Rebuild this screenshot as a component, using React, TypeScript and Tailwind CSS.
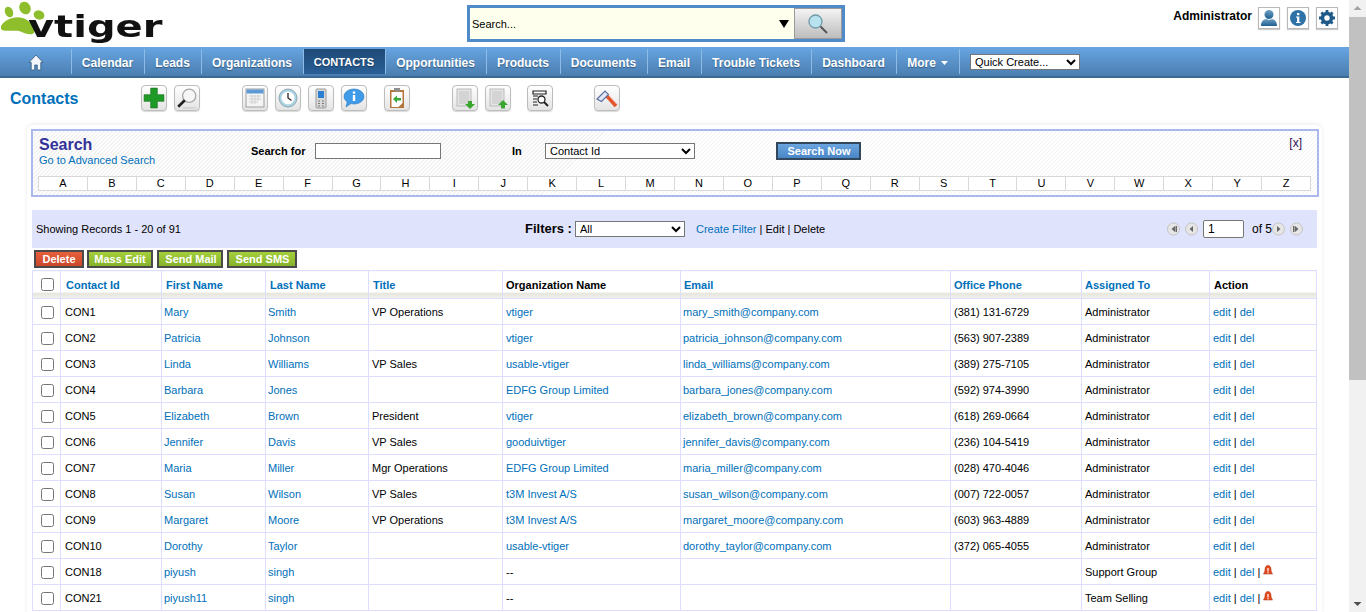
import type { ReactNode } from "react"

const navItems = [
  { label: "Calendar", w: "w-[73px]" },
  { label: "Leads", w: "w-[57px]" },
  { label: "Organizations", w: "w-[102px]" },
  { label: "CONTACTS", w: "w-[82px] text-[11px]", active: true },
  { label: "Opportunities", w: "w-[101px]" },
  { label: "Products", w: "w-[74px]" },
  { label: "Documents", w: "w-[87px]" },
  { label: "Email", w: "w-[54px]" },
  { label: "Trouble Tickets", w: "w-[110px]" },
  { label: "Dashboard", w: "w-[85px]" },
]

const rows = [
  ["CON1", "Mary", "Smith", "VP Operations", "vtiger", "mary_smith@company.com", "(381) 131-6729", "Administrator"],
  ["CON2", "Patricia", "Johnson", "", "vtiger", "patricia_johnson@company.com", "(563) 907-2389", "Administrator"],
  ["CON3", "Linda", "Williams", "VP Sales", "usable-vtiger", "linda_williams@company.com", "(389) 275-7105", "Administrator"],
  ["CON4", "Barbara", "Jones", "", "EDFG Group Limited", "barbara_jones@company.com", "(592) 974-3990", "Administrator"],
  ["CON5", "Elizabeth", "Brown", "President", "vtiger", "elizabeth_brown@company.com", "(618) 269-0664", "Administrator"],
  ["CON6", "Jennifer", "Davis", "VP Sales", "gooduivtiger", "jennifer_davis@company.com", "(236) 104-5419", "Administrator"],
  ["CON7", "Maria", "Miller", "Mgr Operations", "EDFG Group Limited", "maria_miller@company.com", "(028) 470-4046", "Administrator"],
  ["CON8", "Susan", "Wilson", "VP Sales", "t3M Invest A/S", "susan_wilson@company.com", "(007) 722-0057", "Administrator"],
  ["CON9", "Margaret", "Moore", "VP Operations", "t3M Invest A/S", "margaret_moore@company.com", "(603) 963-4889", "Administrator"],
  ["CON10", "Dorothy", "Taylor", "", "usable-vtiger", "dorothy_taylor@company.com", "(372) 065-4055", "Administrator"],
  ["CON18", "piyush", "singh", "", "--", "", "", "Support Group"],
  ["CON21", "piyush11", "singh", "", "--", "", "", "Team Selling"],
]

const headers = [
  { label: "Contact Id", link: true, pl: "pl-[5px]" },
  { label: "First Name", link: true, pl: "pl-[4px]" },
  { label: "Last Name", link: true, pl: "pl-[4px]" },
  { label: "Title", link: true, pl: "pl-[4px]" },
  { label: "Organization Name", link: false, pl: "pl-[3px]" },
  { label: "Email", link: true, pl: "pl-[3px]" },
  { label: "Office Phone", link: true, pl: "pl-[3px]" },
  { label: "Assigned To", link: true, pl: "pl-[3px]" },
  { label: "Action", link: false, pl: "pl-[4px]" },
]

function ToolButton({ children, className = "" }: { children: ReactNode; className?: string }) {
  return (
    <div className={`flex h-[26px] w-[26px] shrink-0 items-center justify-center rounded-[4px] border border-[#bdbdbd] bg-gradient-to-b from-[#ffffff] to-[#e4e4e4] shadow-[0_1px_1px_rgba(0,0,0,0.15)] ${className}`}>
      {children}
    </div>
  )
}

function Logo() {
  return (
    <div className="flex h-[47px] w-[467px] shrink-0 items-start">
      <svg width="50" height="36" viewBox="0 0 50 36" className="shrink-0 blur-[0.5px]">
        <ellipse cx="9" cy="12" rx="4" ry="5.500" fill="#8fbe2c" transform="rotate(-25 9 12)" />
        <ellipse cx="25" cy="8" rx="5.500" ry="6.500" fill="#8fbe2c" transform="rotate(-30 25 8)" />
        <ellipse cx="39" cy="15" rx="5.500" ry="4.500" fill="#8fbe2c" transform="rotate(20 39 15)" />
        <path d="M1 26 C5 19 18 14 27 20 C33 24 36 29 34 33 C31 36 24 33 19 31 C13 30 3 32 1 29 Z" fill="#8fbe2c" />
      </svg>
      <span className="-ml-[22px] mt-[7px] inline-block origin-left scale-x-[1.29] font-['DejaVu_Sans',sans-serif] text-[31px] leading-[38px] font-bold text-[#111111] blur-[0.5px]">
        vtiger
      </span>
    </div>
  )
}

function HeaderIcon({ children }: { children: ReactNode }) {
  return (
    <div className="flex h-[22px] w-[22px] items-center justify-center border border-[#b8b8b8] bg-white shadow-[0_1px_1px_rgba(0,0,0,0.2)]">
      {children}
    </div>
  )
}

function TopBar() {
  return (
    <div className="flex h-[47px] items-start">
      <Logo />
      <div className="mt-[5px] flex h-[37px] w-[378px] border-[3px] border-[#4f8bc9] bg-[#ffffee]">
        <div className="flex flex-1 items-center pt-[1px] pl-[2px] text-[11px] text-black">Search...</div>
        <div className="mr-[4px] flex items-center">
          <svg width="12" height="8" viewBox="0 0 12 8"><path d="M1 0h10L6 8z" fill="#000" /></svg>
        </div>
        <div className="flex w-[48px] items-center justify-center border border-[#9a9a9a] bg-gradient-to-b from-[#f4f4f4] to-[#bdbdbd]">
          <svg width="22" height="22" viewBox="0 0 22 22">
            <circle cx="8.500" cy="8.500" r="6.500" fill="#b8e3ee" stroke="#6f9aa8" strokeWidth="1.300" />
            <path d="M13.500 13.500L20 20" stroke="#555" strokeWidth="2" />
          </svg>
        </div>
      </div>
      <div className="mr-[11px] ml-auto mt-[7px] flex items-start">
        <span className="mt-[2px] mr-[6px] text-[12px] leading-[14px] font-bold text-black">Administrator</span>
        <HeaderIcon>
          <svg width="18" height="18" viewBox="0 0 18 18">
            <defs>
              <linearGradient id="userFill" x1="0" y1="0" x2="0" y2="1">
                <stop offset="0" stopColor="#6fa0c4" />
                <stop offset="1" stopColor="#1f5f90" />
              </linearGradient>
            </defs>
            <circle cx="9" cy="5.500" r="4.500" fill="url(#userFill)" />
            <path d="M1 17c0-5 3-6.500 5-7l3 1 3-1c2 .5 5 2 5 7z" fill="url(#userFill)" />
          </svg>
        </HeaderIcon>
        <div className="w-[7px]" />
        <HeaderIcon>
          <svg width="18" height="18" viewBox="0 0 18 18">
            <circle cx="9" cy="9" r="8" fill="#2f72a6" />
            <path d="M7 7.500h3.300V13h1.200v1h-4.500v-1h1.100V8.500H7z" fill="#fff" />
            <rect x="8" y="4" width="2.400" height="2.200" fill="#fff" />
          </svg>
        </HeaderIcon>
        <div className="w-[7px]" />
        <HeaderIcon>
          <svg width="18" height="18" viewBox="0 0 18 18">
            <circle cx="9" cy="9" r="4.500" fill="none" stroke="#1f5a88" strokeWidth="3.600" />
            <path d="M9 1v3M9 14v3M1 9h3M14 9h3M3.400 3.400l2.100 2.100M12.500 12.500l2.100 2.100M14.600 3.400l-2.100 2.100M5.500 12.500l-2.100 2.100" stroke="#1f5a88" strokeWidth="2.800" />
          </svg>
        </HeaderIcon>
      </div>
    </div>
  )
}

function NavBar() {
  return (
    <div className="flex h-[31px] items-stretch border-b-2 border-b-[#3d6a94] bg-gradient-to-b from-[#68a5e2] to-[#4a7eb0] text-[12px] font-bold text-white">
      <div className="my-[2px] flex w-[72px] items-center justify-center border-r border-[#8dbbe6] pt-[2px]">
        <svg width="16" height="17" viewBox="0 0 16 17">
          <path d="M8 1L1 8.500h2.200V16h3.500v-5h2.600v5h3.500V8.500H15z" fill="#f2f6fa" stroke="#33597d" strokeWidth="0.800" />
        </svg>
      </div>
      {navItems.map((item) => (
        <div
          key={item.label}
          className={`my-[2px] flex items-center justify-center border-r border-[#8dbbe6] pt-[2px] pr-[1px] [text-shadow:0_1px_1px_rgba(0,0,0,0.35)] ${item.w} ${item.active ? "bg-gradient-to-b from-[#1f4a78] to-[#2a5f96]" : ""}`}
        >
          {item.label}
        </div>
      ))}
      <div className="my-[2px] flex w-[63px] items-center justify-center gap-[5px] border-r border-[#8dbbe6] pt-[2px] pr-[1px] [text-shadow:0_1px_1px_rgba(0,0,0,0.35)]">
        More
        <svg width="7" height="4" viewBox="0 0 7 4"><path d="M0 0h7L3.500 4z" fill="#fff" /></svg>
      </div>
      <div className="ml-[10px] flex items-center pt-[1px]">
        <select className="h-[16px] w-[110px] border border-[#767676] bg-white text-[11px] leading-[14px] font-normal text-black">
          <option>Quick Create...</option>
        </select>
      </div>
    </div>
  )
}

function Toolbar() {
  return (
    <div className="flex h-[47px] items-start pt-[7px]">
      <div className="w-[141px] shrink-0 pl-[10px] text-[16px] leading-[28px] font-bold text-[#0070ba]">Contacts</div>
      <ToolButton>
        <svg width="22" height="22" viewBox="0 0 20 20">
          <path d="M7 1h6v6h6v6h-6v6H7v-6H1V7h6z" fill="#1f9a26" stroke="#16721c" strokeWidth="0.600" />
        </svg>
      </ToolButton>
      <ToolButton className="ml-[7px]">
        <svg width="22" height="22" viewBox="0 0 20 20">
          <circle cx="12" cy="8" r="6" fill="#f6f6f6" stroke="#a8a8a8" strokeWidth="1.200" />
          <path d="M8 12L2 18" stroke="#222" strokeWidth="2.400" />
          <path d="M6 19h12" stroke="#c8c8c8" strokeWidth="1" />
        </svg>
      </ToolButton>
      <ToolButton className="ml-[42px]">
        <svg width="20" height="20" viewBox="0 0 20 20">
          <rect x="1" y="1" width="18" height="18" fill="#f4f4f4" stroke="#a0a0a0" />
          <rect x="1.500" y="1.500" width="17" height="4" fill="#5d9ad6" />
          <path d="M4 8h12M4 11h12M4 14h9M7 7v9M10 7v9M13 7v6" stroke="#d0d0d0" strokeWidth="1" />
        </svg>
      </ToolButton>
      <ToolButton className="ml-[7px]">
        <svg width="20" height="20" viewBox="0 0 20 20">
          <circle cx="10" cy="10" r="9" fill="#a9d2e2" stroke="#8fa8b4" />
          <circle cx="10" cy="10" r="6.500" fill="#ffffff" />
          <path d="M10 5v5l3.500 2.500" fill="none" stroke="#222" strokeWidth="1.300" />
        </svg>
      </ToolButton>
      <ToolButton className="ml-[7px]">
        <svg width="14" height="21" viewBox="0 0 14 21">
          <rect x="2" y="1" width="10" height="19" rx="1" fill="#d8d8d8" stroke="#9a9a9a" />
          <rect x="4" y="3" width="6" height="7" fill="#2a7fd0" />
          <path d="M4 13h2M8 13h2M4 15.500h2M8 15.500h2M4 18h2M8 18h2" stroke="#777" strokeWidth="1.200" />
        </svg>
      </ToolButton>
      <ToolButton className="ml-[7px]">
        <svg width="22" height="20" viewBox="0 0 22 20">
          <path d="M11 1c5.500 0 10 3.300 10 7.500S16.500 16 11 16c-1 0-2-.1-3-.4L3 19l1.200-5C2.300 12.600 1 10.700 1 8.500 1 4.300 5.500 1 11 1z" fill="#3f9be8" stroke="#2c79be" strokeWidth="0.600" />
          <rect x="9.800" y="7" width="2.400" height="6" fill="#fff" />
          <rect x="9.800" y="3.500" width="2.400" height="2.200" fill="#fff" />
        </svg>
      </ToolButton>
      <ToolButton className="ml-[17px]">
        <svg width="18" height="22" viewBox="0 0 18 22">
          <path d="M2 3h14v18H2z" fill="#b5763c" />
          <path d="M3.500 5h11v11l-4 4h-7z" fill="#fff" />
          <rect x="6" y="1" width="6" height="3.500" fill="#8f8f8f" />
          <path d="M5 12l4-3.500V11h4v2.500H9V16z" fill="#39a83a" />
        </svg>
      </ToolButton>
      <ToolButton className="ml-[42px]">
        <svg width="24" height="24" viewBox="0 0 24 24">
          <rect x="4" y="3" width="14" height="17" fill="#e4e4e4" stroke="#bbbbbb" />
          <rect x="6" y="5" width="10" height="13" fill="#d4d4d4" />
          <path d="M15 15h4v3h3l-5 5-5-5h3z" fill="#3aa52f" />
        </svg>
      </ToolButton>
      <ToolButton className="ml-[7px]">
        <svg width="24" height="24" viewBox="0 0 24 24">
          <rect x="4" y="3" width="14" height="17" fill="#e4e4e4" stroke="#bbbbbb" />
          <rect x="6" y="5" width="10" height="13" fill="#d4d4d4" />
          <path d="M17 14l5 5h-3v3.500h-4V19h-3z" fill="#3aa52f" />
        </svg>
      </ToolButton>
      <ToolButton className="ml-[16px]">
        <svg width="18" height="18" viewBox="0 0 18 18">
          <path d="M2 2h13v3H2zM2 7h5M2 10h4M2 13h4M2 16h5" fill="none" stroke="#222" strokeWidth="1.200" />
          <circle cx="10.500" cy="10.500" r="3.500" fill="#fff" stroke="#222" strokeWidth="1.300" />
          <path d="M13 13l4 4" stroke="#222" strokeWidth="2" />
        </svg>
      </ToolButton>
      <ToolButton className="ml-[41px]">
        <svg width="24" height="24" viewBox="0 0 24 24">
          <path d="M11 9l10 11" stroke="#e2552a" strokeWidth="3.600" />
          <path d="M12.500 8l9 10" stroke="#f7b29a" strokeWidth="0.800" />
          <path d="M2 13l8-8 3.500 3.500-7 7z" fill="#dfe6f6" stroke="#5b6f9e" strokeWidth="1.100" />
        </svg>
      </ToolButton>
    </div>
  )
}

function SearchPanel() {
  const letters = "ABCDEFGHIJKLMNOPQRSTUVWXYZ".split("")
  return (
    <div className="h-[68px] border-2 border-[#aab8ee] bg-[repeating-linear-gradient(135deg,#ffffff_0,#ffffff_1.9px,#f2f2f2_1.9px,#f2f2f2_2.83px)]">
      <div className="flex h-[45px] items-start text-[11px]">
        <div className="w-[218px] shrink-0 pt-[5px] pl-[6px]">
          <div className="text-[16px] leading-[18px] font-bold text-[#333399]">Search</div>
          <div className="leading-[13px] text-[#0070ba]">Go to Advanced Search</div>
        </div>
        <div className="mt-[12px] w-[64px] shrink-0 leading-[16px] font-bold text-black">Search for</div>
        <input readOnly className="mt-[12px] h-[16px] w-[126px] shrink-0 border border-[#767676] bg-white" />
        <div className="mt-[12px] ml-[71px] w-[33px] shrink-0 leading-[16px] font-bold text-black">In</div>
        <select className="mt-[12px] h-[16px] w-[150px] shrink-0 border border-[#767676] bg-white text-[11px] leading-[14px] text-black">
          <option>Contact Id</option>
        </select>
        <div className="mt-[11px] ml-[81px] flex h-[18px] w-[85px] shrink-0 items-center justify-center border-2 border-[#33475c] bg-gradient-to-b from-[#6aa5e0] to-[#4a86c5] pl-[1px] font-bold text-white">
          Search Now
        </div>
        <div className="mt-[5px] mr-[15px] ml-auto text-[12px] leading-[14px] text-[#331155]">[x]</div>
      </div>
      <div className="ml-[5px] grid w-[1273px] grid-cols-[repeat(26,minmax(0,1fr))] border-t border-l border-[#d8d8d8] bg-white text-[11px] text-black">
        {letters.map((letter) => (
          <div key={letter} className="h-[14px] border-r border-b border-[#d8d8d8] text-center leading-[13px]">
            {letter}
          </div>
        ))}
      </div>
    </div>
  )
}

function PagerIcon({ dir, end }: { dir: "left" | "right"; end?: boolean }) {
  return (
    <svg width="13" height="14" viewBox="0 0 13 14" className="shrink-0">
      <circle cx="6.500" cy="7" r="6" fill="#e6e6e6" stroke="#c4c4c4" />
      {dir === "left" ? <path d="M8 4v6L4.500 7z" fill="#666" /> : <path d="M5 4v6L8.500 7z" fill="#666" />}
      {end && dir === "left" && <rect x="8.500" y="4" width="1.500" height="6" fill="#666" />}
      {end && dir === "right" && <rect x="3" y="4" width="1.500" height="6" fill="#666" />}
    </svg>
  )
}

function FilterBar() {
  return (
    <div className="mt-[13px] ml-[1px] flex h-[38px] w-[1285px] items-center bg-[#e0e3fc] text-[11px] text-black">
      <div className="w-[493px] shrink-0 pl-[4px]">Showing Records 1 - 20 of 91</div>
      <div className="w-[50px] shrink-0 text-[13px] font-bold">Filters :</div>
      <select className="h-[16px] w-[110px] shrink-0 border border-[#767676] bg-white text-[11px] leading-[14px]">
        <option>All</option>
      </select>
      <div className="ml-[11px]">
        <span className="text-[#0070ba]">Create Filter</span> | Edit | Delete
      </div>
      <div className="mr-[14px] ml-auto flex items-center">
        <PagerIcon dir="left" end />
        <div className="w-[5px]" />
        <PagerIcon dir="left" />
        <input readOnly value="1" className="ml-[5px] h-[18px] w-[41px] rounded-[2px] border border-[#767676] bg-white pl-[4px] text-[12px]" />
        <span className="ml-[8px] w-[20px] text-[12px] whitespace-nowrap">of 5</span>
        <PagerIcon dir="right" />
        <div className="w-[5px]" />
        <PagerIcon dir="right" end />
      </div>
    </div>
  )
}

function ActionButtons() {
  const green = "border-2 border-[#4a4a4a] bg-gradient-to-b from-[#a5cf3c] to-[#85b32a]"
  return (
    <div className="mt-[2px] ml-[3px] flex h-[20px] items-start text-[11px] font-bold text-white">
      <div className="flex h-[18px] w-[50px] items-center justify-center border-2 border-[#4a4a4a] bg-gradient-to-b from-[#e8603c] to-[#c9472a]">Delete</div>
      <div className={`ml-[3px] flex h-[18px] w-[66px] items-center justify-center ${green}`}>Mass Edit</div>
      <div className={`ml-[4px] flex h-[18px] w-[66px] items-center justify-center pl-[2px] ${green}`}>Send Mail</div>
      <div className={`ml-[4px] flex h-[18px] w-[70px] items-center justify-center pl-[1px] ${green}`}>Send SMS</div>
    </div>
  )
}

function AlertIcon() {
  return (
    <svg width="10" height="11" viewBox="0 0 10 11" className="-mt-[3px] ml-[3px] inline-block align-baseline">
      <path d="M5 0.500C7.200 0.500 8 2.500 8 4.500c0 2 .8 3 1.500 4.500h-9C1.200 7.500 2 6.500 2 4.500 2 2.500 2.800.5 5 .5z" fill="#e2481c" stroke="#a83010" strokeWidth="0.500" />
      <rect x="4.400" y="3" width="1.200" height="3.500" fill="#fff" />
      <rect x="4.400" y="7.200" width="1.200" height="1.200" fill="#fff" />
    </svg>
  )
}

function ContactsTable() {
  const cell = "border border-[#ddddff] pt-[2px] align-middle overflow-hidden whitespace-nowrap"
  const link = "text-[#0070ba]"
  return (
    <table className="ml-[1px] w-[1285px] table-fixed border-collapse text-[11px] leading-[13px] text-black">
      <colgroup>
        <col className="w-[28px]" />
        <col className="w-[101px]" />
        <col className="w-[104px]" />
        <col className="w-[103px]" />
        <col className="w-[134px]" />
        <col className="w-[178px]" />
        <col className="w-[270px]" />
        <col className="w-[131px]" />
        <col className="w-[128px]" />
        <col className="w-[107px]" />
      </colgroup>
      <thead>
        <tr className="h-[28px]">
          <th className="border border-[#ddddff] bg-[linear-gradient(to_bottom,#ffffff_78%,#e4e4dc_80%,#f4f4ee_100%)] pl-[1px] text-center align-middle">
            <input type="checkbox" className="align-middle" />
          </th>
          {headers.map((h) => (
            <th
              key={h.label}
              className={`border border-[#ddddff] bg-[linear-gradient(to_bottom,#ffffff_78%,#e4e4dc_80%,#f4f4ee_100%)] pt-[2px] text-left align-middle font-bold ${h.pl} ${h.link ? link : "text-black"}`}
            >
              {h.label}
            </th>
          ))}
        </tr>
      </thead>
      <tbody>
        {rows.map((r) => {
          const hasAlert = r[0] === "CON18" || r[0] === "CON21"
          return (
            <tr key={r[0]} className="h-[26px] bg-white">
              <td className="border border-[#ddddff] pt-[1px] pl-[1px] text-center align-middle">
                <input type="checkbox" className="align-middle" />
              </td>
              <td className={`${cell} pl-[4px]`}>{r[0]}</td>
              <td className={`${cell} pl-[2px] ${link}`}>{r[1]}</td>
              <td className={`${cell} pl-[2px] ${link}`}>{r[2]}</td>
              <td className={`${cell} pl-[3px]`}>{r[3]}</td>
              <td className={`${cell} pl-[3px] ${r[4] === "--" ? "text-black" : link}`}>{r[4]}</td>
              <td className={`${cell} pl-[2px] ${link}`}>{r[5]}</td>
              <td className={`${cell} pl-[3px]`}>{r[6]}</td>
              <td className={`${cell} pl-[3px]`}>{r[7]}</td>
              <td className={`${cell} pl-[3px]`}>
                <span className={link}>edit</span> | <span className={link}>del</span>
                {hasAlert && <> |<AlertIcon /></>}
              </td>
            </tr>
          )
        })}
      </tbody>
    </table>
  )
}

export default function App() {
  return (
    <div className="flex h-[612px] w-full overflow-hidden bg-white font-['Liberation_Sans',Arial,sans-serif]">
      <div className="w-[1349px] shrink-0 overflow-hidden">
        <TopBar />
        <NavBar />
        <Toolbar />
        <div className="mx-[27px] rounded-t-[6px] p-[4px] pr-[3px] shadow-[0_-1px_4px_rgba(0,0,0,0.08)]">
          <SearchPanel />
          <FilterBar />
          <ActionButtons />
          <ContactsTable />
        </div>
      </div>
      {/* page scrollbar */}
      <div className="flex w-[17px] shrink-0 flex-col items-center bg-[#f1f1f1]">
        <svg width="9" height="17" viewBox="0 0 9 17"><path d="M0.500 10L4.500 6l4 4z" fill="#a3a3a3" /></svg>
        <div className="h-[363px] w-full bg-[#c1c1c1]" />
        <div className="flex-1" />
        <svg width="9" height="17" viewBox="0 0 9 17"><path d="M0.500 7l4 4 4-4z" fill="#505050" /></svg>
      </div>
    </div>
  )
}
